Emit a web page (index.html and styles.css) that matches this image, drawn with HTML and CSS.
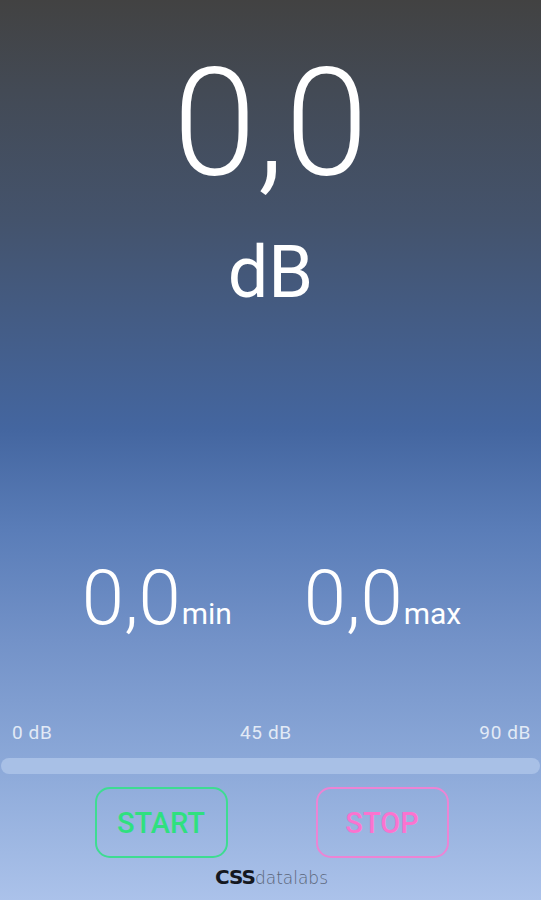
FILE: index.html
```html
<!DOCTYPE html>
<html lang="es">
<head>
  <meta charset="UTF-8" />
  <meta name="viewport" content="width=device-width, initial-scale=1.0"/>
  <title>Sonómetro</title>
  <link rel="stylesheet" href="styles.css">
</head>
<body>
  <div class="app">
    <!-- lectura principal -->
    <div class="lectura">0,0</div>
    <div class="unidad">dB</div>

    <!-- minimo y maximo -->
    <div class="extremos">
      <div class="extremo"><span class="valor">0,0</span><span class="etiqueta">min</span></div>
      <div class="extremo"><span class="valor">0,0</span><span class="etiqueta">max</span></div>
    </div>

    <div class="escala">
      <span>0 dB</span>
      <span>45 dB</span>
      <span>90 dB</span>
    </div>
    <div class="barra"><div class="relleno"></div></div>

    <div class="botones">
      <button class="btn btn-start">START</button>
      <button class="btn btn-stop">STOP</button>
    </div>

    <div class="marca"><span class="marca-css">CSS</span><span class="marca-resto">datalabs</span></div>
  </div>
</body>
</html>
```

FILE: styles.css
```css
body {
  margin: 0;
  font-family: Roboto, "Liberation Sans", sans-serif;
  color: #fff;
}

.app {
  height: 900px;
  display: flex;
  flex-direction: column;
  text-align: center;
  background: linear-gradient(to bottom,
    #424242 0px,
    #434a55 90px,
    #44536c 220px,
    #4466a0 430px,
    #5a7db8 530px,
    #7392c8 640px,
    #8ba8d8 760px,
    #abc2ea 900px);
}

.lectura {
  margin-top: 49px;
  font-size: 150px;
  font-weight: 300;
  line-height: 1;
}

.unidad {
  margin-top: 38px;
  font-size: 72px;
  line-height: 1;
}

.extremos {
  margin-top: 251px;
  display: flex;
  justify-content: center;
  gap: 72px;
  padding-left: 2px;
}

.extremo {
  display: flex;
  align-items: baseline;
  line-height: 1;
}

.valor {
  font-size: 76px;
  font-weight: 300;
}

.etiqueta {
  font-size: 30px;
  margin-left: 1px;
}

.escala {
  margin-top: 86px;
  display: flex;
  justify-content: space-between;
  padding: 0 10px 0 12px;
  font-size: 19px;
  letter-spacing: 0.6px;
  line-height: 22px;
  color: #e2eaf6;
}

.barra {
  margin: 14px 1px 0 1px;
  height: 16px;
  border-radius: 8px;
  background: #a8c0e6;
}

.relleno {
  width: 0;
}

.botones {
  margin-top: 13px;
  display: flex;
  justify-content: center;
  gap: 88px;
  padding-left: 2px;
}

.btn {
  width: 133px;
  height: 71px;
  background: transparent;
  border: 2px solid;
  border-radius: 15px;
  font-family: Roboto, "Liberation Sans", sans-serif;
  font-size: 29px;
  font-weight: 500;
  cursor: pointer;
}

.btn-start {
  border-color: #3edc92;
  color: #2fe07f;
}

.btn-stop {
  border-color: #ec84d4;
  color: #fb73cf;
}

.marca {
  margin-top: 8px;
  font-size: 17px;
  line-height: 22px;
  padding-left: 2px;
}

.marca-css {
  font-family: "DejaVu Sans", sans-serif;
  font-size: 20px;
  font-weight: bold;
  color: #15181f;
  letter-spacing: -1px;
}

.marca-resto {
  font-family: "DejaVu Sans", sans-serif;
  font-weight: 200;
  color: #5a6578;
}
```
